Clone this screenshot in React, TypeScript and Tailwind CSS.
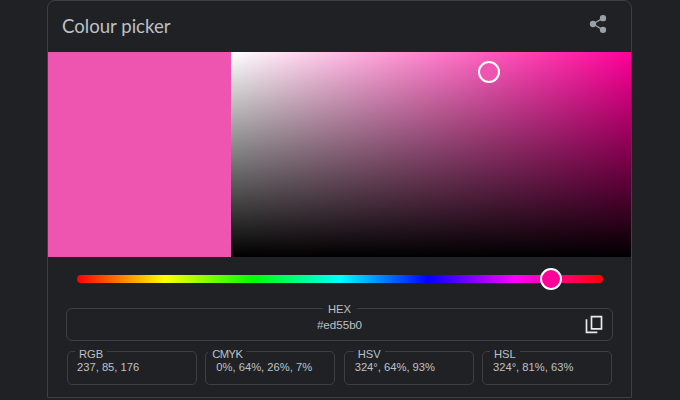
import { Share2 } from "lucide-react";

const boxes = [
  { label: "RGB", value: "237, 85, 176", labelClass: "ml-[7px]", valueClass: "pl-[9px]" },
  { label: "CMYK", value: "0%, 64%, 26%, 7%", labelClass: "ml-[2px] tracking-[-0.6px]", valueClass: "pl-[10px]" },
  { label: "HSV", value: "324°, 64%, 93%", labelClass: "ml-[9px]", valueClass: "pl-[10px]" },
  { label: "HSL", value: "324°, 81%, 63%", labelClass: "ml-[7px]", valueClass: "pl-[10px]" },
];

function ValueBox({ label, value, labelClass, valueClass }: (typeof boxes)[number]) {
  return (
    <div className="relative h-[34px] w-[130px] rounded-[5px] border border-[#3c4043]">
      <span className={`absolute -top-[5px] left-0 ${labelClass} bg-[#202124] px-[4px] text-[11.2px] leading-[14px] text-[#bdc1c6]`}>
        {label}
      </span>
      <div className={`pt-[7px] text-[11.2px] leading-[16px] text-[#bdc1c6] ${valueClass}`}>{value}</div>
    </div>
  );
}

export default function App() {
  return (
    <div className="h-[400px] w-[680px] overflow-hidden bg-[#202124] pl-[47px] font-['Liberation_Sans',sans-serif]">
      <div className="h-[398px] w-[585px] rounded-t-[8px] border border-[#3c4043]">
        <div className="flex h-[51px] items-center justify-between pl-[14px] pr-[23px]">
          <h2 className="font-['Lato',sans-serif] text-[18.6px] text-[#bdc1c6]">Colour picker</h2>
          <Share2 size={20} fill="#9aa0a6" stroke="#9aa0a6" strokeWidth={1.6} className="mb-[5px]" />
        </div>

        <div className="flex h-[205px]">
          <div className="w-[183px] bg-[#ed55b0]" />
          <div className="relative flex-1 bg-[linear-gradient(to_top,#000,transparent),linear-gradient(to_right,#fff,#ff0099)]">
            <div className="absolute left-[247px] top-[9px] h-[22px] w-[22px] rounded-full border-2 border-white bg-[#ed55b0]" />
          </div>
        </div>

        <div className="relative ml-[29px] mr-[28px] mt-[18px] h-[8px] rounded-full bg-[linear-gradient(to_right,#f00,#ff0,#0f0,#0ff,#00f,#f0f,#f00)]">
          <div className="absolute left-[463px] top-[-7px] h-[22px] w-[22px] rounded-full border-2 border-white bg-[#ff0099]" />
        </div>

        <div className="relative mx-[18px] mt-[25px] flex h-[33px] items-center justify-center rounded-[6px] border border-[#3c4043]">
          <span className="absolute left-1/2 top-[-7px] -translate-x-1/2 bg-[#202124] px-[5px] text-[11.2px] leading-[14px] text-[#bdc1c6]">
            HEX
          </span>
          <span className="pt-[1px] text-[11.6px] text-[#bdc1c6]">#ed55b0</span>
          <svg viewBox="0 0 24 24" className="absolute right-[8px] top-[5px] h-[21px] w-[20px]" fill="#e8eaed" preserveAspectRatio="none">
            <path d="M4 6H2v16h14v-2H4V6zm4-4v16h14V2H8zm12 14H10V4h10v12z" />
          </svg>
        </div>

        <div className="mx-[19px] mt-[10px] flex justify-between">
          {boxes.map((box) => (
            <ValueBox key={box.label} {...box} />
          ))}
        </div>
      </div>
    </div>
  );
}
